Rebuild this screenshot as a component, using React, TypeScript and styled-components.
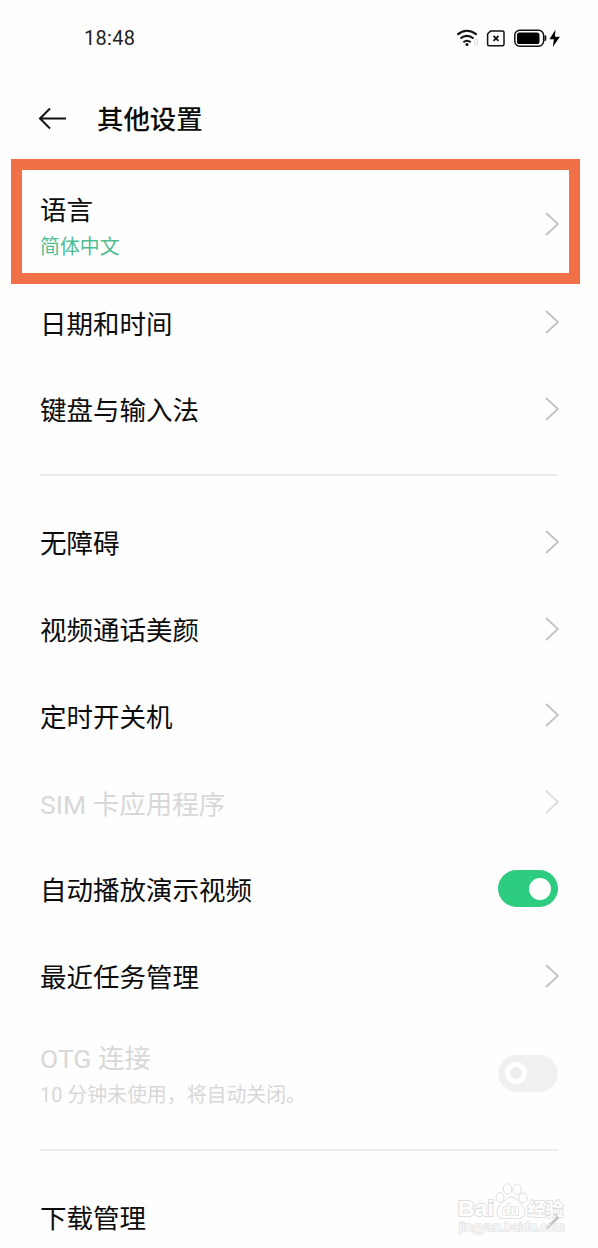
import React from "react";
import styled, { createGlobalStyle } from "styled-components";

const GlobalStyle = createGlobalStyle`
  * { box-sizing: border-box; }
  body {
    margin: 0;
    background: #fefefe;
    font-family: Roboto, "Noto Sans CJK SC", sans-serif;
    color: #0c0c0c;
  }
`;

const Screen = styled.main`
  position: relative;
  width: 598px;
  height: 1248px;
  overflow: hidden;
  background: #fefefe;
`;

const StatusBar = styled.div`
  height: 76px;
  padding: 0 37px 0 84px;
  display: flex;
  align-items: center;
  justify-content: space-between;
`;

const Clock = styled.span`
  font-size: 20px;
  line-height: 24px;
  letter-spacing: 0.3px;
  color: #222;
`;

const StatusIcons = styled.svg`
  display: block;
  width: 105px;
  height: 24px;
`;

const Header = styled.header`
  height: 83px;
  padding: 0 38px;
  display: flex;
  align-items: center;
  gap: 31px;
`;

const BackIcon = styled.svg`
  display: block;
  width: 28px;
  height: 24px;
`;

const Title = styled.h1`
  margin: 0;
  padding-top: 5px;
  font-size: 26.4px;
  line-height: 36px;
  font-weight: 500;
`;

const Highlight = styled.section`
  height: 125px;
  margin: 0 18px 0 11px;
  border: 11px solid #f27047;
  padding: 4px 10px 0 18px;
  display: flex;
  align-items: center;
  justify-content: space-between;
`;

const Group = styled.section`
  padding: 0 39px 0 40px;
  display: flex;
  flex-direction: column;
  gap: 10.8px;
`;

const Row = styled.div<{ $tall?: boolean }>`
  height: ${(p) => (p.$tall ? 97 : 76)}px;
  flex: none;
  display: flex;
  align-items: center;
  justify-content: space-between;
`;

const Labels = styled.div<{ $drop: number }>`
  display: flex;
  flex-direction: column;
  padding-top: ${(p) => p.$drop}px;
`;

const Label = styled.span<{ $disabled?: boolean }>`
  padding-top: 5px;
  font-size: 26.5px;
  line-height: 38px;
  white-space: nowrap;
  color: ${(p) => (p.$disabled ? "#d8d8d8" : "#0c0c0c")};
`;

const Note = styled.span<{ $accent?: boolean }>`
  font-size: 19.9px;
  line-height: 36px;
  white-space: nowrap;
  color: ${(p) => (p.$accent ? "#4fbd92" : "#d8d8d8")};
`;

const Divider = styled.hr`
  height: 2px;
  margin: 27px 40px 28px;
  border: 0;
  background: #ececec;
`;

const ChevronIcon = styled.svg`
  display: block;
  width: 14px;
  height: 24px;
`;

const Toggle = styled.span<{ $on?: boolean }>`
  width: 60px;
  height: 37px;
  margin-right: 1px;
  border-radius: 19px;
  padding: 0 7px;
  display: flex;
  align-items: center;
  justify-content: ${(p) => (p.$on ? "flex-end" : "flex-start")};
  background: ${(p) => (p.$on ? "#2ecc80" : "#f0f0f0")};
`;

const Knob = styled.span<{ $on?: boolean }>`
  width: 22px;
  height: 22px;
  border-radius: 50%;
  border: 5px solid #fff;
  background: ${(p) => (p.$on ? "#fff" : "#ededed")};
`;

const Watermark = styled.svg`
  position: absolute;
  left: 454px;
  top: 1178px;
  width: 120px;
  height: 60px;

  text {
    paint-order: stroke;
  }
`;

const Chevron = ({ faint }: { faint?: boolean }) => (
  <ChevronIcon viewBox="0 0 14 24" fill="none" stroke={faint ? "#dcdcdc" : "#c2c2c2"} strokeWidth="1.9">
    <path d="M1 1 13 12 1 23" />
  </ChevronIcon>
);

const Item = ({ text, disabled }: { text: string; disabled?: boolean }) => (
  <Row>
    <Label $disabled={disabled}>{text}</Label>
    <Chevron faint={disabled} />
  </Row>
);

export default function App() {
  return (
    <>
      <GlobalStyle />
      <Screen>
        <StatusBar>
          <Clock>18:48</Clock>
          <StatusIcons viewBox="456 26 105 24" fill="none">
            <g stroke="#111" strokeWidth="2">
              <path d="M457.3 34.6Q467 27 476.7 34.6" />
              <path d="M460.4 38.5Q467 33.2 473.6 38.5" />
              <path d="M463.4 42.2Q467 39.2 470.6 42.2" />
            </g>
            <circle cx="467" cy="44.6" r="1.5" fill="#111" />
            <rect x="475" y="39.5" width="2.6" height="5.5" rx="1" stroke="#ccc" strokeWidth=".8" />
            <path d="M490.5 31H502.5Q504 31 504 32.5V44.2Q504 45.7 502.5 45.7H489Q487.6 45.7 487.6 44.2V34Z" stroke="#111" strokeWidth="1.5" />
            <path d="M493.5 35.8 498.5 40.8M498.5 35.8 493.5 40.8" stroke="#111" strokeWidth="1.8" />
            <rect x="514.8" y="30.3" width="28.8" height="16" rx="5" stroke="#111" strokeWidth="1.5" />
            <rect x="517" y="32.6" width="22.5" height="11.4" rx="2.6" fill="#000" />
            <path d="M544.5 35.3h.6q1.2 0 1.2 1.2v3.2q0 1.2-1.2 1.2h-.6Z" fill="#111" />
            <path d="M555.4 29.8 549.4 39.3H553.9L552.8 47 559.9 36.8H555Z" fill="#000" />
          </StatusIcons>
        </StatusBar>
        <Header>
          <BackIcon viewBox="0 0 28 24" fill="none" stroke="#111" strokeWidth="2">
            <path d="M28 12.5H2M12 2.5 2 12.5 12 22.5" />
          </BackIcon>
          <Title>其他设置</Title>
        </Header>
        <Highlight>
          <Labels $drop={6}>
            <Label>语言</Label>
            <Note $accent>简体中文</Note>
          </Labels>
          <Chevron />
        </Highlight>
        <Group>
          <Item text="日期和时间" />
          <Item text="键盘与输入法" />
        </Group>
        <Divider />
        <Group>
          <Item text="无障碍" />
          <Item text="视频通话美颜" />
          <Item text="定时开关机" />
          <Item text="SIM 卡应用程序" disabled />
          <Row>
            <Label>自动播放演示视频</Label>
            <Toggle $on>
              <Knob $on />
            </Toggle>
          </Row>
          <Item text="最近任务管理" />
          <Row $tall>
            <Labels $drop={3}>
              <Label $disabled>OTG 连接</Label>
              <Note>10 分钟未使用，将自动关闭。</Note>
            </Labels>
            <Toggle>
              <Knob />
            </Toggle>
          </Row>
        </Group>
        <Divider />
        <Group>
          <Item text="下载管理" />
        </Group>
        <Watermark viewBox="454 1178 120 60" fill="#fff" stroke="#dfdfdf" strokeWidth="1">
          <ellipse cx="500" cy="1197.5" rx="4" ry="5" />
          <ellipse cx="507.5" cy="1189" rx="4.2" ry="5.3" />
          <ellipse cx="517" cy="1189.5" rx="4.2" ry="5.3" />
          <ellipse cx="523" cy="1198" rx="4" ry="5" />
          <path d="M511 1197C506 1197 504 1202 500.5 1205C495 1210 496 1218.5 503 1218.5H519C526 1218.5 527 1210 521.5 1205C518 1202 516.5 1197 511 1197Z" />
          <g fontFamily="Liberation Sans, sans-serif" fontWeight="700" strokeWidth="2">
            <text x="458" y="1216" fontSize="21.5" textLength="36" lengthAdjust="spacingAndGlyphs">Bai</text>
            <text x="502" y="1215" fontSize="15.5" strokeWidth="1.6" textLength="17" lengthAdjust="spacingAndGlyphs">du</text>
            <text x="527.5" y="1216" fontSize="18" fontFamily="Noto Sans CJK SC, sans-serif" strokeWidth="1.7" textLength="36">经验</text>
            <text x="459" y="1230.5" fontSize="12.5" fontWeight="400" strokeWidth="1.6" fillOpacity=".85" strokeOpacity=".8" textLength="106" lengthAdjust="spacingAndGlyphs">jingyan.baidu.com</text>
          </g>
          <path d="M554.5 1214.5 558.5 1218 547 1228.5" fill="none" stroke="#c6c6c6" strokeWidth="1.6" />
        </Watermark>
      </Screen>
    </>
  );
}
